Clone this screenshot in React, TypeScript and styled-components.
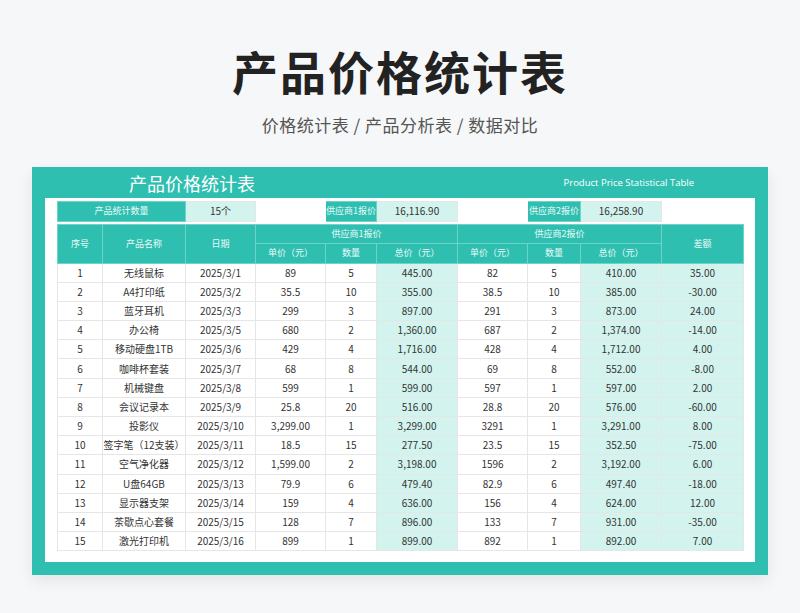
import styled, { createGlobalStyle } from 'styled-components';

const GlobalStyle = createGlobalStyle`
  body {
    margin: 0;
    background: #f6f7f8;
    font-family: "Noto Sans CJK SC", "Noto Sans", sans-serif;
  }
`;

const rows = [
  [1, '无线鼠标', '2025/3/1', '89', 5, '445.00', '82', 5, '410.00', '35.00'],
  [2, 'A4打印纸', '2025/3/2', '35.5', 10, '355.00', '38.5', 10, '385.00', '-30.00'],
  [3, '蓝牙耳机', '2025/3/3', '299', 3, '897.00', '291', 3, '873.00', '24.00'],
  [4, '办公椅', '2025/3/5', '680', 2, '1,360.00', '687', 2, '1,374.00', '-14.00'],
  [5, '移动硬盘1TB', '2025/3/6', '429', 4, '1,716.00', '428', 4, '1,712.00', '4.00'],
  [6, '咖啡杯套装', '2025/3/7', '68', 8, '544.00', '69', 8, '552.00', '-8.00'],
  [7, '机械键盘', '2025/3/8', '599', 1, '599.00', '597', 1, '597.00', '2.00'],
  [8, '会议记录本', '2025/3/9', '25.8', 20, '516.00', '28.8', 20, '576.00', '-60.00'],
  [9, '投影仪', '2025/3/10', '3,299.00', 1, '3,299.00', '3291', 1, '3,291.00', '8.00'],
  [10, '签字笔（12支装）', '2025/3/11', '18.5', 15, '277.50', '23.5', 15, '352.50', '-75.00'],
  [11, '空气净化器', '2025/3/12', '1,599.00', 2, '3,198.00', '1596', 2, '3,192.00', '6.00'],
  [12, 'U盘64GB', '2025/3/13', '79.9', 6, '479.40', '82.9', 6, '497.40', '-18.00'],
  [13, '显示器支架', '2025/3/14', '159', 4, '636.00', '156', 4, '624.00', '12.00'],
  [14, '茶歇点心套餐', '2025/3/15', '128', 7, '896.00', '133', 7, '931.00', '-35.00'],
  [15, '激光打印机', '2025/3/16', '899', 1, '899.00', '892', 1, '892.00', '7.00'],
];

const widths = [45, 83, 70, 70, 51, 81, 70, 53, 81, 82];
const lightCols = [5, 8, 9];

const Page = styled.div`
  width: 800px;
  height: 613px;
  display: flex;
  flex-direction: column;
  align-items: center;
`;

const Title = styled.h1`
  margin: 40px 0 0;
  font-size: 46px;
  line-height: 60px;
  font-weight: 700;
  color: #222;
  letter-spacing: 2px;
`;

const Subtitle = styled.div`
  margin-top: 12px;
  font-size: 17px;
  color: #555;
  letter-spacing: 0.5px;
`;

const Card = styled.div`
  margin-top: 30px;
  width: 736px;
  background: #2fbfb1;
  box-shadow: 0 6px 14px rgba(0, 0, 0, 0.08);
  padding: 0 13px 13px;
  box-sizing: border-box;
`;

const Band = styled.div`
  height: 31px;
  display: flex;
  align-items: center;
  justify-content: space-between;
  color: #fff;
`;

const BandTitle = styled.div`
  margin-left: 84px;
  font-size: 18px;
`;

const BandEn = styled.div`
  margin-right: 61px;
  font-size: 9.5px;
  font-family: "Open Sans", "Liberation Sans", sans-serif;
`;

const Sheet = styled.div`
  background: #fff;
  padding: 3px 12px 11px;
`;

const Table = styled.table`
  border-collapse: collapse;
  table-layout: fixed;
  width: 686px;
  font-size: 10px;
  color: #333;
  text-align: center;
`;

const Cell = styled.td<{ $kind?: 'head' | 'light' | 'blank' | 'body' }>`
  height: ${({ $kind }) => ($kind === 'head' ? '18.5px' : '18.2px')};
  padding: 0;
  line-height: 12px;
  white-space: nowrap;
  overflow: hidden;
  border: 1px solid
    ${({ $kind }) => ($kind === 'head' ? '#6fd3c8' : $kind === 'blank' ? '#fff' : '#e6e6e6')};
  background: ${({ $kind }) =>
    $kind === 'head' ? '#2fbfb1' : $kind === 'light' ? '#d3f3ee' : '#fff'};
  color: ${({ $kind }) => ($kind === 'head' ? '#eafaf8' : '#333')};
  font-size: ${({ $kind }) => ($kind === 'head' ? '9px' : '10px')};
`;

const Spacer = styled.tr`
  height: 3px;
`;

export default function App() {
  return (
    <Page>
      <GlobalStyle />
      <Title>产品价格统计表</Title>
      <Subtitle>价格统计表 / 产品分析表 / 数据对比</Subtitle>
      <Card>
        <Band>
          <BandTitle>产品价格统计表</BandTitle>
          <BandEn>Product Price Statistical Table</BandEn>
        </Band>
        <Sheet>
          <Table>
            <colgroup>
              {widths.map((w, i) => (
                <col key={i} style={{ width: w }} />
              ))}
            </colgroup>
            <tbody>
              <tr>
                <Cell $kind="head" colSpan={2}>产品统计数量</Cell>
                <Cell $kind="light">15个</Cell>
                <Cell $kind="blank" />
                <Cell $kind="head">供应商1报价</Cell>
                <Cell $kind="light">16,116.90</Cell>
                <Cell $kind="blank" />
                <Cell $kind="head">供应商2报价</Cell>
                <Cell $kind="light">16,258.90</Cell>
                <Cell $kind="blank" />
              </tr>
              <Spacer />
              <tr>
                <Cell $kind="head" rowSpan={2}>序号</Cell>
                <Cell $kind="head" rowSpan={2}>产品名称</Cell>
                <Cell $kind="head" rowSpan={2}>日期</Cell>
                <Cell $kind="head" colSpan={3}>供应商1报价</Cell>
                <Cell $kind="head" colSpan={3}>供应商2报价</Cell>
                <Cell $kind="head" rowSpan={2}>差额</Cell>
              </tr>
              <tr>
                <Cell $kind="head">单价（元）</Cell>
                <Cell $kind="head">数量</Cell>
                <Cell $kind="head">总价（元）</Cell>
                <Cell $kind="head">单价（元）</Cell>
                <Cell $kind="head">数量</Cell>
                <Cell $kind="head">总价（元）</Cell>
              </tr>
              {rows.map((r) => (
                <tr key={r[0]}>
                  {r.map((v, i) => (
                    <Cell key={i} $kind={lightCols.includes(i) ? 'light' : 'body'}>
                      {v}
                    </Cell>
                  ))}
                </tr>
              ))}
            </tbody>
          </Table>
        </Sheet>
      </Card>
    </Page>
  );
}
